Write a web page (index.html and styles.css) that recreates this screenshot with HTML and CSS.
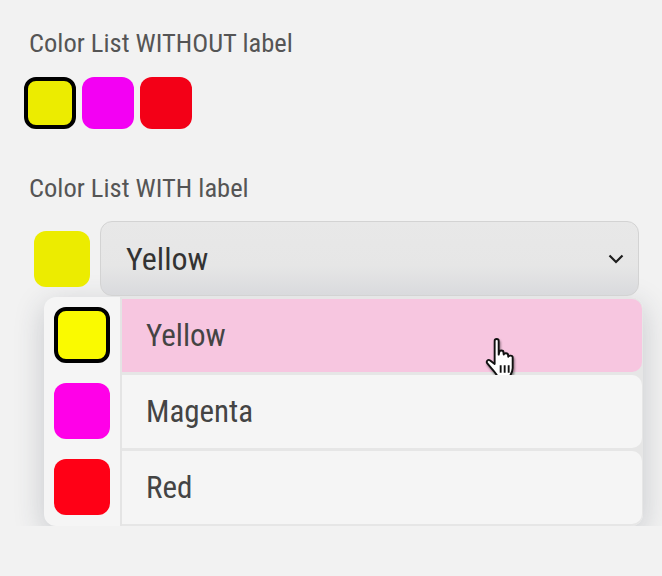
FILE: index.html
```html
<!DOCTYPE html>
<html>
<head>
  <title>Color List</title>
  <link rel="stylesheet" href="styles.css">
</head>
<body>
  <div class="page">
    <div class="label">Color List WITHOUT label</div>
    <div class="swatches">
      <span class="swatch yellow selected"></span>
      <span class="swatch magenta"></span>
      <span class="swatch red"></span>
    </div>

    <div class="label label-second">Color List WITH label</div>
    <div class="picker">
      <div class="picker-row">
        <span class="swatch big yellow"></span>
        <div class="select">
          <span class="select-text">Yellow</span>
          <svg class="chevron" width="16" height="10" viewBox="0 0 16 10">
            <path d="M1.5 1.5 L8 8 L14.5 1.5" fill="none" stroke="#1e1e1e" stroke-width="2.2"/>
          </svg>
        </div>
      </div>

      <div class="menu">
        <div class="menu-swatches">
          <span class="swatch big bright-yellow selected"></span>
          <span class="swatch big bright-magenta"></span>
          <span class="swatch big bright-red"></span>
        </div>
        <div class="menu-items">
          <div class="menu-item hover">
            Yellow
            <svg class="pointer" width="40" height="48" viewBox="0 0 30 36">
              <path d="M8 3.5 C8 1.8 11 1.8 11 3.5 L11 14 L11.5 12 C11.5 10.5 14.5 10.5 14.5 12 L14.8 14 C15 12.6 18 12.6 18 14.2 L18.2 15.6 C18.5 14.3 21.5 14.4 21.5 16 L21.5 24 C21.5 27 20 29 19 31 L10.5 31 C9.5 28.5 7.5 26.5 5 23.5 L2.5 20.5 C1.3 19 3 17.2 4.6 18.3 L8 21 Z" fill="#fff" stroke="#111" stroke-width="1.4" stroke-linejoin="round"/>
              <path d="M12.5 22 V27.5 M15.5 22 V27.5 M18.5 22 V27.5" stroke="#111" stroke-width="1.4"/>
            </svg>
          </div>
          <div class="menu-item">Magenta</div>
          <div class="menu-item">Red</div>
        </div>
      </div>
    </div>
  </div>
</body>
</html>
```

FILE: styles.css
```css
body {
  margin: 0;
  background-color: #f2f2f2;
  font-family: Roboto, "Noto Sans", sans-serif;
}

.page {
  padding: 28px 0 0 24px;
}

.label {
  margin-left: 5px;
  font-size: 26.5px;
  line-height: 30px;
  font-stretch: 85%;
  color: #555;
}

.label-second {
  margin-top: 44px;
}

.swatches {
  display: flex;
  gap: 6px;
  margin-top: 19px;
}

.swatch {
  display: block;
  width: 52px;
  height: 52px;
  box-sizing: border-box;
  border-radius: 12px;
}

.swatch.big {
  width: 56px;
  height: 56px;
}

.swatch.selected {
  border: 4px solid #000;
}

.yellow { background-color: #ecec00; }
.magenta { background-color: #f300f3; }
.red { background-color: #f30017; }
.bright-yellow { background-color: #fafa00; }
.bright-magenta { background-color: #ff00e8; }
.bright-red { background-color: #ff0016; }

.picker {
  margin-top: 18px;
  margin-left: 10px;
}

.picker-row {
  display: flex;
  align-items: center;
  gap: 10px;
}

.select {
  display: flex;
  align-items: center;
  justify-content: space-between;
  width: 539px;
  height: 75px;
  box-sizing: border-box;
  padding: 0 14px 0 25px;
  border: 1px solid #d3d3d3;
  border-radius: 12px;
  background: linear-gradient(to bottom, #e8e8e8 0%, #e6e6e6 60%, #d9dadd 100%);
}

.select-text {
  font-size: 32px;
  font-stretch: 85%;
  color: #333;
}

.menu {
  display: flex;
  width: 599px;
  margin: 1px 0 0 10px;
  background-color: #f5f5f5;
  border-radius: 12px;
  box-shadow: 0 8px 30px rgba(40, 50, 70, 0.22);
  overflow: hidden;
}

.menu-swatches {
  display: flex;
  flex-direction: column;
  gap: 20px;
  width: 78px;
  padding: 10px 0 0 10px;
  box-sizing: border-box;
  border-right: 2px solid #e4e4e4;
}

.menu-items {
  flex: 1;
  display: flex;
  flex-direction: column;
  gap: 3px;
  padding: 2px 1px 2px 0;
  background-color: #e6e6e6;
}

.menu-item {
  position: relative;
  display: flex;
  align-items: center;
  height: 73px;
  padding-left: 24px;
  background-color: #f5f5f5;
  border-radius: 0 10px 10px 0;
  font-size: 31px;
  font-stretch: 85%;
  color: #444;
}

.menu-item.hover {
  background-color: #f7c6e0;
}

.pointer {
  position: absolute;
  left: 362px;
  top: 37px;
  filter: drop-shadow(1px 2px 1px rgba(0, 0, 0, 0.45));
}
```
